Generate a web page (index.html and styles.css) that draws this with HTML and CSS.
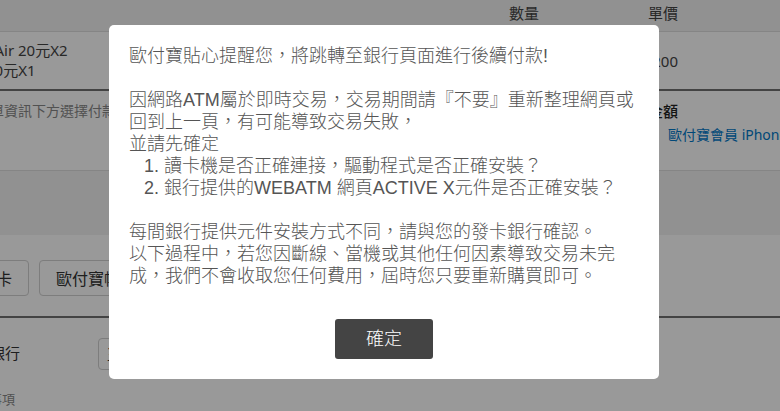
FILE: index.html
```html
<!DOCTYPE html>
<html lang="zh-Hant">
<head>
<meta charset="utf-8">
<title>歐付寶</title>
<link rel="stylesheet" href="styles.css">
</head>
<body>
<main class="page">
  <table class="order">
    <colgroup><col><col class="col"><col class="col"><col class="col-last"></colgroup>
    <thead>
      <tr><th></th><th>數量</th><th>單價</th><th></th></tr>
    </thead>
    <tbody>
      <tr><td class="items">iPad Air 20元X2<br>Set 10元X1</td><td></td><td>200</td><td></td></tr>
    </tbody>
  </table>
  <section class="summary">
    <p class="hint">請於訂單資訊下方選擇付款</p>
    <div class="total">
      <strong>金額</strong>
      <a href="#member">歐付寶會員 iPhone</a>
    </div>
  </section>
  <section class="payment">
    <div class="methods">
      <button type="button">信用卡</button>
      <button type="button">歐付寶帳戶</button>
    </div>
    <div class="bank">
      <label for="bank">選擇銀行</label>
      <select id="bank"><option>玉山銀行</option></select>
    </div>
    <p class="notes">注意事項</p>
  </section>
</main>
<div class="overlay">
  <section class="modal" role="dialog" aria-modal="true">
    <p>歐付寶貼心提醒您，將跳轉至銀行頁面進行後續付款!</p>
    <div class="steps">
      <p>因網路ATM屬於即時交易，交易期間請『不要』重新整理網頁或回到上一頁，有可能導致交易失敗，<br>並請先確定</p>
      <ol>
        <li>讀卡機是否正確連接，驅動程式是否正確安裝？</li>
        <li>銀行提供的WEBATM 網頁ACTIVE X元件是否正確安裝？</li>
      </ol>
    </div>
    <p>每間銀行提供元件安裝方式不同，請與您的發卡銀行確認。<br>以下過程中，若您因斷線、當機或其他任何因素導致交易未完成，我們不會收取您任何費用，屆時您只要重新購買即可。</p>
    <button class="confirm" type="button">確定</button>
  </section>
</div>
</body>
</html>
```
FILE: styles.css
```css
* { box-sizing: border-box; }
html, body { height: 100%; }
body {
  margin: 0;
  overflow: hidden;
  background: #fff;
  color: #444;
  font-family: "Noto Sans", "Noto Sans CJK TC", sans-serif;
  font-size: 15px;
}
p { margin: 0; }

/* The page is scrolled sideways behind the dialog */
.page { margin-left: -60px; }

.order {
  width: 100%;
  table-layout: fixed;
  border-collapse: separate;
  border-spacing: 0;
  border-bottom: 2px solid #717171;
  line-height: 20px;
}
.order .col { width: 139px; }
.order .col-last { width: 102px; }
.order th, .order td { padding: 0; text-align: right; font-weight: 400; }
.order th {
  height: 32px;
  padding-bottom: 5px;
  background: #f2f2f2;
  border-bottom: 1px solid #dedede;
}
.order td { height: 57px; }
.order .items { padding: 0 0 2px 20px; text-align: left; }

.summary {
  display: flex;
  justify-content: space-between;
  height: 80px;
  padding-top: 8px;
  border-bottom: 1px solid #dedede;
}
.hint { padding-left: 8px; font-size: 14px; line-height: 24px; color: #888; }
.total { display: flex; flex-direction: column; width: 132px; line-height: 24px; white-space: nowrap; }
.total strong { font-weight: 500; color: #222; }
.total a { padding-left: 20px; font-size: 14px; color: #0078c8; text-decoration: none; }

.payment {
  border-top: 64px solid #f2f2f2;
  padding-top: 25px;
}
.methods {
  display: flex;
  gap: 10px;
  padding: 0 0 20px 7px;
  border-bottom: 2px solid #717171;
}
.methods button {
  height: 36px;
  padding: 0 16px;
  border: 1px solid #d0d0d0;
  border-radius: 4px;
  background: #fff;
  color: #333;
  font: inherit;
  font-size: 16px;
}
.bank { display: flex; align-items: center; padding: 20px 0 0 20px; color: #333; }
.bank label { width: 138px; padding-bottom: 4px; }
.bank select {
  width: 200px;
  height: 32px;
  padding: 0 8px;
  border: 1px solid #d0d0d0;
  border-radius: 4px;
  appearance: none;
  background: #fff;
  color: #333;
  font: inherit;
}
.notes { padding: 18px 0 0 23px; font-size: 13px; line-height: 22px; color: #888; }

.overlay {
  position: fixed;
  inset: 0;
  display: flex;
  justify-content: center;
  align-items: flex-start;
  padding: 25px 12px 0 0;
  background: rgba(0, 0, 0, .4);
}
.modal {
  display: flex;
  flex-direction: column;
  gap: 22px;
  width: 100%;
  max-width: 550px;
  padding: 20px;
  border-radius: 5px;
  background: #fff;
  color: #555;
  font-family: "Liberation Sans", "Noto Sans CJK TC", sans-serif;
  font-size: 18px;
  font-weight: 300;
  line-height: 22px;
}
.modal ol { margin: 0; padding-left: 35px; }
.confirm {
  align-self: center;
  width: 98px;
  height: 40px;
  margin-top: 10px;
  border: 0;
  border-radius: 3px;
  background: #444;
  color: #fff;
  font: inherit;
}
```
